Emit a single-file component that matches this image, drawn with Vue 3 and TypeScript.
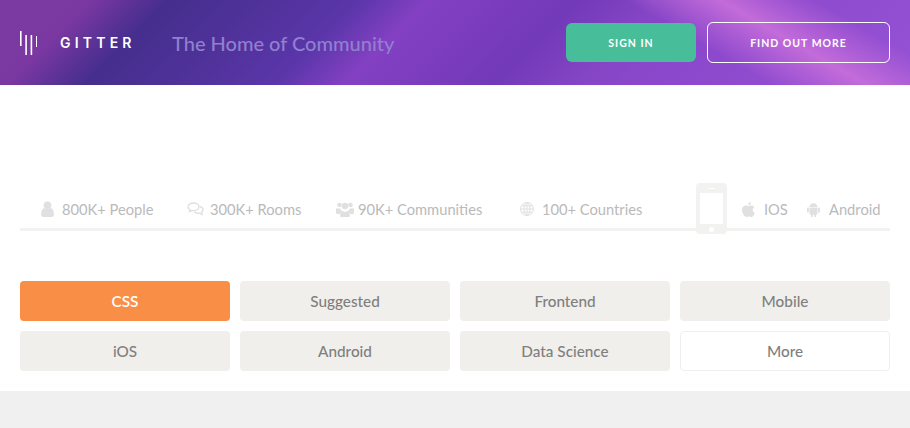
<script setup lang="ts">
interface Tag { label: string; kind?: string }
const tags: Tag[] = [
  { label: 'CSS', kind: 'active' },
  { label: 'Suggested' },
  { label: 'Frontend' },
  { label: 'Mobile' },
  { label: 'iOS' },
  { label: 'Android' },
  { label: 'Data Science' },
  { label: 'More', kind: 'outline' },
]
</script>

<template>
  <div class="page">
    <header class="hero">
      <div class="brand">
        <svg class="logo" width="17" height="24" viewBox="0 0 17 24" fill="#fff">
          <rect x="0" y="0" width="1.6" height="15" />
          <rect x="5.300" y="4" width="1.6" height="20" />
          <rect x="10.600" y="4" width="1.6" height="20" />
          <rect x="16" y="5" width="1" height="11" />
        </svg>
        <span class="word">GITTER</span>
      </div>
      <span class="tagline">The Home of Community</span>
      <div class="actions">
        <a class="btn signin">SIGN IN</a>
        <a class="btn findout">FIND OUT MORE</a>
      </div>
    </header>

    <main class="main">
      <div class="stats">
        <div class="stat w1">
          <svg class="ico" width="13" height="16" viewBox="0 0 12 15"><circle cx="6" cy="4" r="3.6" /><path d="M0 13c0-4 1-6 3-6.500 1.800 1.300 4.200 1.300 6 0 2 .5 3 2.500 3 6.500 0 1.300-1 2-2 2H2c-1 0-2-.7-2-2z" /></svg>
          <span>800K+ People</span>
        </div>
        <div class="stat w2">
          <svg class="line-ico" width="17" height="14" viewBox="0 0 17 14"><path d="M6.500 1C3.500 1 1 2.700 1 4.800c0 1.200.8 2.200 2 3L2.500 9.500 5 8.500c.5.100 1 .1 1.500.1 3 0 5.500-1.700 5.500-3.800S9.500 1 6.500 1z" /><path d="M13 4.500c1.800.6 3 1.800 3 3.300 0 1-.6 1.900-1.500 2.500l.5 2.200-2.500-1.300c-2.200.3-4.300-.4-5.400-1.600" /></svg>
          <span>300K+ Rooms</span>
        </div>
        <div class="stat w3">
          <svg class="ico" width="18" height="17" viewBox="0 0 18 15"><circle cx="3.500" cy="3" r="2.300" /><circle cx="14.500" cy="3" r="2.300" /><circle cx="9" cy="4" r="3.200" /><path d="M0 6.500h4.200c.5 1.300 1 2 1.800 2.500-1 .8-1.600 1.800-1.700 3H1.500C.5 12 0 11.500 0 10.500z" /><path d="M18 6.500h-4.200c-.5 1.300-1 2-1.800 2.500 1 .8 1.600 1.800 1.700 3h2.800c1 0 1.500-.5 1.500-1.500z" /><path d="M5 15c-.5 0-.9-.5-.9-1 0-2.500 1-4.500 2.200-4.900 1.600 1.100 3.800 1.100 5.400 0 1.200.4 2.200 2.400 2.200 4.900 0 .5-.4 1-.9 1z" /></svg>
          <span>90K+ Communities</span>
        </div>
        <div class="stat w4">
          <svg class="line-ico thin" width="14" height="14" viewBox="0 0 14 14"><circle cx="7" cy="7" r="6.500" /><ellipse cx="7" cy="7" rx="3" ry="6.500" /><path d="M7 .5v13M1.500 3.800h11M.5 7h13M1.500 10.200h11" /></svg>
          <span>100+ Countries</span>
        </div>
        <div class="phone">
          <i class="speaker"></i>
          <i class="screen"></i>
          <i class="home"></i>
        </div>
        <div class="stat w5">
          <svg class="ico" width="13" height="15" viewBox="0 0 13 15"><path d="M9 0c.1 1.800-1.300 3.300-3 3.300C5.900 1.600 7.400.1 9 0z" /><path d="M6.300 4.300c.8 0 1.700-.7 2.900-.7 1.300 0 2.400.6 3.100 1.700-2.300 1.300-2 4.600.5 5.600-.7 1.800-2 4-3.300 4.100-.9 0-1.400-.6-2.500-.6s-1.700.6-2.500.6C2.700 15 0 11.300 0 8.100c0-2.900 1.800-4.500 3.600-4.500 1.100 0 2 .7 2.700.7z" /></svg>
          <span>IOS</span>
        </div>
        <div class="stat w6">
          <svg class="ico" width="13" height="15" viewBox="0 0 13 15"><path d="M2.500 5.200h8V4.800C10.400 3.500 9.700 2.500 8.800 1.900l.6-1.100-.3-.2-.6 1.100a5 5 0 0 0-4 0L3.900.6l-.3.2.6 1.100C3.300 2.500 2.600 3.500 2.500 4.800z" /><path d="M2.500 5.800h8v6c0 .5-.4.9-.9.9H9v1.500a.9.9 0 0 1-1.800 0v-1.500H5.800v1.500a.9.9 0 0 1-1.800 0v-1.500h-.6c-.5 0-.9-.4-.9-.9z" /><rect x="0" y="5.600" width="1.900" height="5" rx=".9" /><rect x="11.100" y="5.600" width="1.900" height="5" rx=".9" /></svg>
          <span>Android</span>
        </div>
      </div>

      <div class="tags">
        <button v-for="t in tags" :key="t.label" class="tag" :class="t.kind">{{ t.label }}</button>
      </div>
    </main>

    <footer class="foot"></footer>
  </div>
</template>

<style>
html, body { margin: 0; background: #fff; }
</style>

<style scoped>
.page {
  width: 910px;
  height: 428px;
  overflow: hidden;
  display: flex;
  flex-direction: column;
  font-family: "Lato", "Noto Sans", sans-serif;
  background: #fff;
}
.hero {
  height: 85px;
  flex: none;
  box-sizing: border-box;
  padding: 0 20px;
  display: flex;
  align-items: center;
  background:
    linear-gradient(30deg, rgba(196, 108, 218, 0) 73%, rgba(196, 108, 218, .98) 82%, rgba(196, 108, 218, 0) 91%),
    linear-gradient(135deg, #7a3aa0 0, #7b38a2 9%, #452e8e 17%, #50329a 27%, #5a36aa 36%, #8340c2 43%, #7239b8 58%, #8445c4 66%, #8c48cc 74%, #9652d4 100%);
}
.brand { display: flex; align-items: center; width: 152px; }
.logo { flex: none; }
.word {
  margin-left: 23px;
  color: #fff;
  font: 600 14px "Inter", sans-serif;
  letter-spacing: 4.200px;
}
.tagline {
  color: #9180cf;
  font-size: 20px;
  font-weight: 500;
  white-space: nowrap;
}
.actions { margin-left: auto; display: flex; align-items: center; gap: 11px; }
.btn {
  display: flex;
  align-items: center;
  justify-content: center;
  box-sizing: border-box;
  color: #fff;
  font-size: 10.500px;
  font-weight: 700;
  letter-spacing: 1px;
  border-radius: 6px;
}
.signin { width: 130px; height: 39px; background: #48bd9a; }
.findout { width: 183px; height: 41px; border: 1.500px solid #fff; }
.main {
  flex: 1;
  padding: 98px 20px 20px;
}
.stats {
  display: flex;
  align-items: center;
  height: 48px;
  box-sizing: border-box;
  border-bottom: 3px solid #f2f2f0;
  padding-left: 21px;
  color: #bababa;
  font-size: 14.700px;
}
.stat { display: flex; align-items: center; white-space: nowrap; margin-top: 7px; }
.ico { flex: none; fill: #e0e0e0; }
.line-ico { flex: none; fill: none; stroke: #e0e0e0; stroke-width: 1.400; }
.line-ico.thin { stroke-width: 1; }
.w1 { width: 146px; gap: 8px; }
.w2 { width: 149px; gap: 6px; }
.w3 { width: 184px; gap: 4px; }
.w4 { width: 176px; gap: 8px; }
.w5 { width: 65px; gap: 9px; }
.w6 { gap: 9px; }
.phone {
  flex: none;
  align-self: flex-start;
  width: 31px;
  height: 51px;
  margin-right: 15px;
  position: relative;
  background: #f2f2f0;
  border-radius: 4px;
}
.screen {
  position: absolute;
  left: 4px;
  top: 10px;
  width: 23px;
  height: 31px;
  background: #fff;
}
.speaker {
  position: absolute;
  left: 12px;
  top: 5px;
  width: 7px;
  height: 1px;
  background: #fff;
}
.home {
  position: absolute;
  left: 13px;
  top: 44px;
  width: 5px;
  height: 5px;
  border-radius: 50%;
  background: #fff;
}
.tags {
  margin-top: 50px;
  display: grid;
  grid-template-columns: repeat(4, 210px);
  grid-auto-rows: 40px;
  gap: 10px;
}
.tag {
  border: 0;
  padding: 0;
  border-radius: 4px;
  background: #f0efeb;
  color: #7f7f7f;
  font: 500 15.300px "Lato", "Noto Sans", sans-serif;
}
.tag.active { background: #f98e46; color: #fff; font-weight: 600; }
.tag.outline { background: #fff; border: 1px solid #f0efeb; }
.foot { height: 37px; flex: none; background: #f0f0f0; }
</style>
